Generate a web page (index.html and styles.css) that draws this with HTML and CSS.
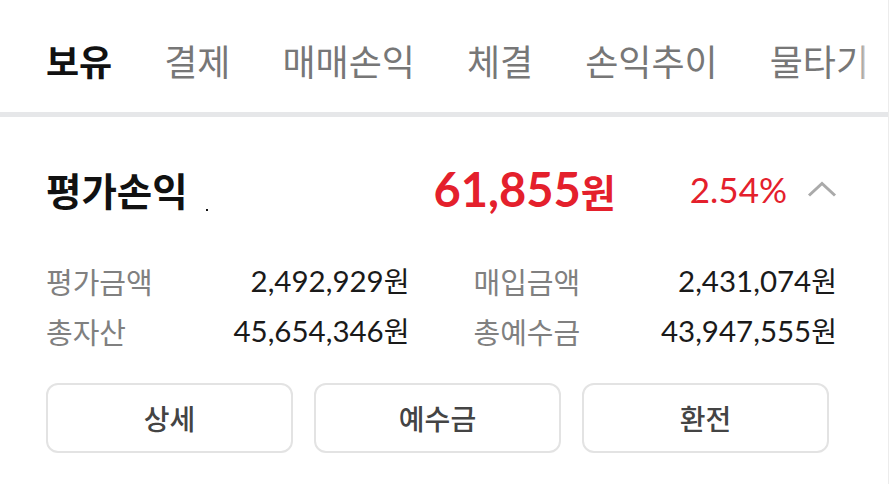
FILE: index.html
```html
<!DOCTYPE html>
<html lang="ko">
<head>
<meta charset="utf-8">
<title>보유</title>
<link rel="stylesheet" href="styles.css">
</head>
<body>
<div class="page">
  <nav class="tabs">
    <div class="tab active">보유</div>
    <div class="tab">결제</div>
    <div class="tab">매매손익</div>
    <div class="tab">체결</div>
    <div class="tab">손익추이</div>
    <div class="tab">물타기</div>
    <div class="tab-fade"></div>
  </nav>
  <section class="summary">
    <div class="head">
      <div class="title">평가손익<span class="dot"></span></div>
      <div class="amount">61,855<span class="won">원</span></div>
      <div class="pct">2.54%</div>
      <svg class="chev" width="30" height="16" viewBox="0 0 30 16" aria-hidden="true"><polyline points="2,14.5 15,2.5 28,14.5" fill="none" stroke="#aaaaaa" stroke-width="3"/></svg>
    </div>
    <div class="grid">
      <div class="pair"><span class="label">평가금액</span><span class="value">2,492,929<span class="w">원</span></span></div>
      <div class="pair"><span class="label">매입금액</span><span class="value">2,431,074<span class="w">원</span></span></div>
      <div class="pair"><span class="label">총자산</span><span class="value">45,654,346<span class="w">원</span></span></div>
      <div class="pair"><span class="label">총예수금</span><span class="value">43,947,555<span class="w">원</span></span></div>
    </div>
    <div class="buttons">
      <button class="btn">상세</button>
      <button class="btn">예수금</button>
      <button class="btn">환전</button>
    </div>
  </section>
</div>
</body>
</html>
```

FILE: styles.css
```css
html, body {
  margin: 0;
  padding: 0;
  background: #ffffff;
}
body {
  font-family: "Lato", "Noto Sans CJK KR", sans-serif;
  color: #1a1a1a;
}
.page {
  width: 888px;
  height: 484px;
  border-right: 1px solid #ececec;
  overflow: hidden;
}
.tabs {
  position: relative;
  display: flex;
  gap: 52px;
  height: 112px;
  padding-left: 46px;
  border-bottom: 5px solid #e6e7e9;
  overflow: hidden;
  white-space: nowrap;
  font-family: "Noto Sans CJK KR", sans-serif;
}
.tab {
  display: flex;
  align-items: center;
  height: 112px;
  padding-top: 8px;
  box-sizing: border-box;
  font-size: 36px;
  line-height: 1;
  color: #777777;
  flex: none;
}
.tab.active {
  color: #111111;
  font-weight: 700;
  height: 117px;
  border-bottom: 5px solid #111111;
  margin-bottom: -5px;
}
.tab-fade {
  position: absolute;
  top: 0;
  right: 0;
  width: 29px;
  height: 112px;
  background: linear-gradient(to right, rgba(255,255,255,0) 0, #ffffff 9px);
}
.summary {
  padding-left: 46px;
}
.head {
  display: flex;
  align-items: center;
  height: 144px;
  padding-right: 51px;
}
.title {
  flex: 1;
  position: relative;
  font-family: "Noto Sans CJK KR", sans-serif;
  font-size: 38.5px;
  font-weight: 700;
  color: #111111;
  line-height: 1;
}
.dot {
  position: absolute;
  left: 160px;
  top: 39px;
  width: 2px;
  height: 2px;
  background: #111111;
}
.amount {
  font-size: 47px;
  font-weight: 700;
  color: #e4202c;
  line-height: 1;
}
.won {
  font-size: 38px;
  font-family: "Noto Sans CJK KR", sans-serif;
}
.pct {
  margin-left: 74px;
  font-size: 35px;
  color: #e4202c;
  line-height: 1;
}
.chev {
  margin-left: 20px;
  display: block;
}
.grid {
  display: grid;
  grid-template-columns: 1fr 1fr;
  column-gap: 64px;
  padding-right: 51px;
  margin-top: -5px;
}
.pair {
  display: flex;
  justify-content: space-between;
  align-items: center;
  height: 50px;
}
.label {
  font-family: "Noto Sans CJK KR", sans-serif;
  font-size: 29px;
  color: #808080;
  line-height: 1;
}
.value {
  font-size: 29.5px;
  color: #1a1a1a;
  line-height: 1;
}
.w {
  font-family: "Noto Sans CJK KR", sans-serif;
  font-size: 28px;
}
.buttons {
  display: flex;
  gap: 21px;
  margin-top: 27px;
  padding-right: 59px;
}
.btn {
  flex: 1;
  height: 70px;
  border: 2px solid #e3e3e3;
  border-radius: 12px;
  background: #ffffff;
  font-family: "Noto Sans CJK KR", sans-serif;
  font-size: 28px;
  font-weight: 500;
  color: #444444;
  padding: 0;
}
```
